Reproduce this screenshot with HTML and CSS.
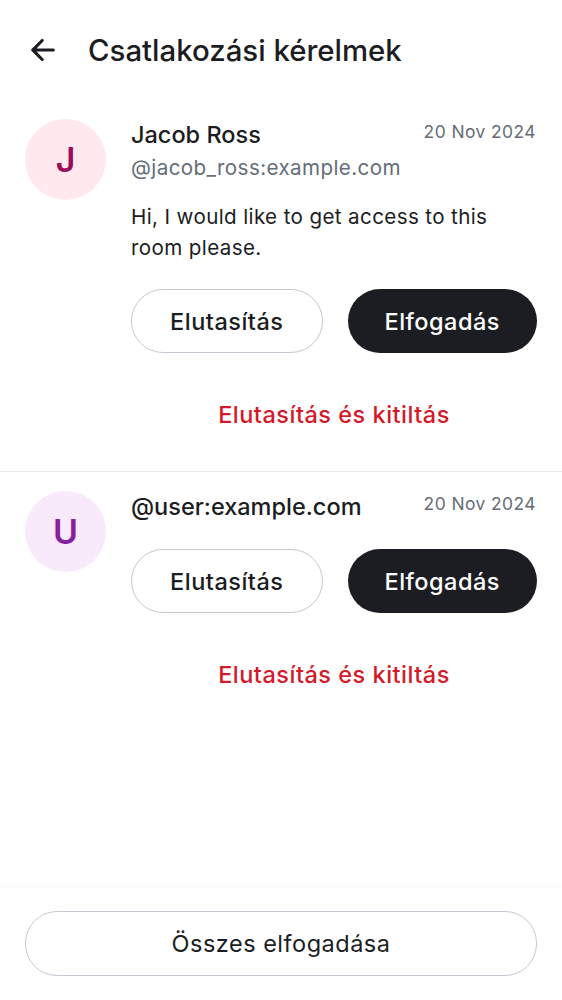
FILE: index.html
```html
<!DOCTYPE html>
<html lang="hu">
<head>
<meta charset="utf-8">
<title>Csatlakozási kérelmek</title>
<link rel="stylesheet" href="styles.css">
</head>
<body>
<div class="screen">
  <header class="topbar">
    <button class="back" aria-label="Vissza">
      <svg width="38" height="38" viewBox="0 0 24 24"><path d="M12.207 5.293a1 1 0 0 1 0 1.414L7.914 11H18.5a1 1 0 1 1 0 2H7.914l4.293 4.293a1 1 0 0 1-1.414 1.414l-6-6a1 1 0 0 1 0-1.414l6-6a1 1 0 0 1 1.414 0z" fill="#1b1d22"/></svg>
    </button>
    <h1 class="title">Csatlakozási kérelmek</h1>
  </header>

  <main class="list">
    <section class="request">
      <div class="avatar avatar-j">J</div>
      <div class="body">
        <div class="head">
          <div class="names">
            <div class="name">Jacob Ross</div>
            <div class="handle">@jacob_ross:example.com</div>
          </div>
          <div class="date">20 Nov 2024</div>
        </div>
        <p class="message">Hi, I would like to get access to this room please.</p>
        <div class="actions">
          <button class="btn btn-outline">Elutasítás</button>
          <button class="btn btn-filled">Elfogadás</button>
        </div>
        <button class="btn-text">Elutasítás és kitiltás</button>
      </div>
    </section>
    <div class="divider"></div>
    <section class="request">
      <div class="avatar avatar-u">U</div>
      <div class="body">
        <div class="head">
          <div class="names">
            <div class="name">@user:example.com</div>
          </div>
          <div class="date">20 Nov 2024</div>
        </div>
        <div class="actions">
          <button class="btn btn-outline">Elutasítás</button>
          <button class="btn btn-filled">Elfogadás</button>
        </div>
        <button class="btn-text">Elutasítás és kitiltás</button>
      </div>
    </section>
  </main>

  <footer class="bottombar">
    <button class="btn btn-outline btn-wide">Összes elfogadása</button>
  </footer>
</div>
</body>
</html>
```

FILE: styles.css
```css
* { box-sizing: border-box; }
html, body { margin: 0; padding: 0; background: #ffffff; }
body {
  font-family: Inter, Roboto, sans-serif;
  color: #1b1d22;
  width: 562px;
  height: 1000px;
  overflow: hidden;
}
button { font-family: inherit; cursor: pointer; }
.screen {
  height: 1000px;
  display: flex;
  flex-direction: column;
}
.topbar {
  height: 100px;
  display: flex;
  align-items: center;
  padding: 0 0 0 24px;
  gap: 26px;
}
.back {
  border: 0;
  background: none;
  padding: 0;
  width: 38px;
  height: 38px;
  display: flex;
}
.title {
  margin: 0;
  font-size: 29.4px;
  font-weight: 500;
  color: #1b1d22;
}
.list { flex: 1; }
.request {
  display: flex;
  gap: 25px;
  padding: 19px 25px 0 25px;
}
.avatar {
  width: 81px;
  height: 81px;
  border-radius: 50%;
  flex: none;
  display: flex;
  align-items: center;
  justify-content: center;
  font-size: 34px;
  font-weight: 600;
}
.avatar-j { background: #ffe9ee; color: #9b0d5a; }
.avatar-u { background: #f8eafa; color: #87209d; }
.body { flex: 1; min-width: 0; }
.head {
  display: flex;
  justify-content: space-between;
  align-items: flex-start;
}
.name {
  font-size: 23.5px;
  font-weight: 500;
  line-height: 32px;
  color: #1b1d22;
}
.handle {
  font-size: 20.6px;
  line-height: 34px;
  letter-spacing: 0.4px;
  color: #656d77;
}
.date {
  font-size: 17.4px;
  line-height: 26px;
  letter-spacing: 0.45px;
  color: #656d77;
  padding-right: 1px;
}
.message {
  margin: 16px 0 0 0;
  font-size: 20.6px;
  line-height: 31px;
  letter-spacing: 0.37px;
  color: #1b1d22;
}
.actions {
  display: flex;
  gap: 25px;
  margin-top: 26px;
}
.btn {
  flex: 1;
  height: 64px;
  border-radius: 32px;
  font-size: 23.5px;
  font-weight: 500;
  letter-spacing: 0.5px;
  display: flex;
  align-items: center;
  justify-content: center;
}
.btn-outline {
  background: #fff;
  border: 1.5px solid #c4c9d2;
  color: #1b1d22;
}
.btn-filled {
  background: #1b1d22;
  border: 0;
  color: #fff;
}
.btn-text {
  display: block;
  width: 100%;
  height: 64px;
  margin-top: 29px;
  border: 0;
  background: none;
  font-size: 23.5px;
  font-weight: 500;
  letter-spacing: 0.5px;
  color: #d51928;
  padding: 0;
}
.divider {
  height: 1px;
  background: #e9eaec;
  margin-top: 25px;
}
.bottombar {
  padding: 23px 25px 24px 25px;
  box-shadow: 0 -4px 6px rgba(0,0,0,0.02);
  background: #fff;
}
.btn-wide {
  width: 100%;
  height: 65px;
  font-weight: 400;
}
```
